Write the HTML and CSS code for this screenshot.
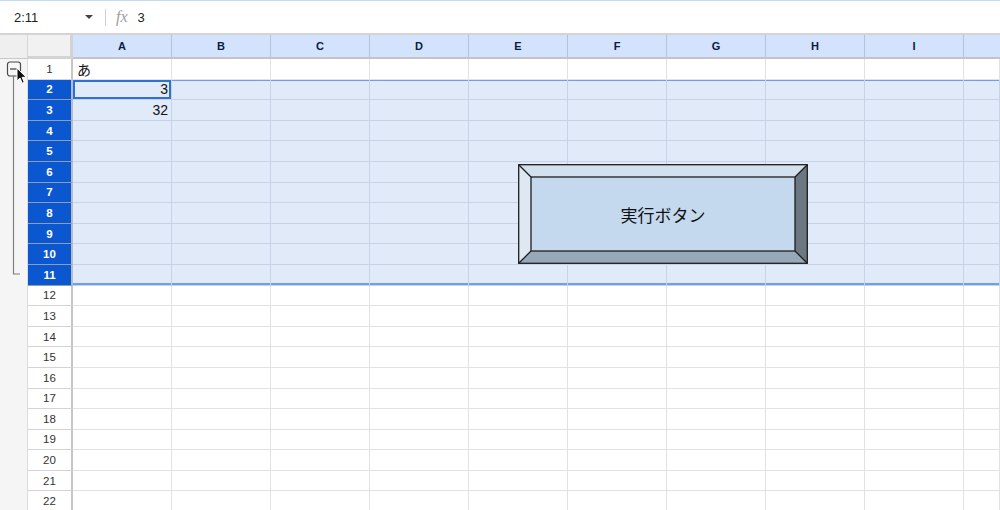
FILE: index.html
```html
<!DOCTYPE html>
<html lang="ja">
<head>
<meta charset="utf-8">
<title>Sheet</title>
<link rel="stylesheet" href="styles.css">
</head>
<body>
<div class="app">
  <div class="formula">
    <div class="namebox"><span class="ref">2:11</span><span class="caret"></span></div>
    <div class="sep"></div>
    <span class="fx">fx</span>
    <span class="fval">3</span>
  </div>
  <div class="sheet">
    <div class="grid">
      <div class="ghead"></div>
      <div class="corner"></div>
      <div class="ch">A</div><div class="ch">B</div><div class="ch">C</div><div class="ch">D</div><div class="ch">E</div><div class="ch">F</div><div class="ch">G</div><div class="ch">H</div><div class="ch">I</div><div class="ch last"></div>
      <div class="gbody">
        <svg class="bracket" width="28" height="220" viewBox="0 0 28 220">
          <rect x="7.5" y="3" width="13" height="14" rx="2.5" fill="#f7f7f7" stroke="#4a4a4a" stroke-width="1.2"/>
          <line x1="10" y1="10" x2="18" y2="10" stroke="#4a4a4a" stroke-width="1.3"/>
          <polyline points="13.5,17 13.5,215 20,215" fill="none" stroke="#7a7a7a" stroke-width="1.1"/>
        </svg>
      </div>

      <div class="row"><div class="rh">1</div><div class="c t"><span>あ</span></div><div class="c"></div><div class="c"></div><div class="c"></div><div class="c"></div><div class="c"></div><div class="c"></div><div class="c"></div><div class="c"></div><div class="c"></div></div>
      <div class="row sel first"><div class="rh">2</div><div class="c n active">3</div><div class="c"></div><div class="c"></div><div class="c"></div><div class="c"></div><div class="c"></div><div class="c"></div><div class="c"></div><div class="c"></div><div class="c"></div></div>
      <div class="row sel"><div class="rh">3</div><div class="c n">32</div><div class="c"></div><div class="c"></div><div class="c"></div><div class="c"></div><div class="c"></div><div class="c"></div><div class="c"></div><div class="c"></div><div class="c"></div></div>
      <div class="row sel"><div class="rh">4</div><div class="c"></div><div class="c"></div><div class="c"></div><div class="c"></div><div class="c"></div><div class="c"></div><div class="c"></div><div class="c"></div><div class="c"></div><div class="c"></div></div>
      <div class="row sel"><div class="rh">5</div><div class="c"></div><div class="c"></div><div class="c"></div><div class="c"></div><div class="c"></div><div class="c"></div><div class="c"></div><div class="c"></div><div class="c"></div><div class="c"></div></div>
      <div class="row sel"><div class="rh">6</div><div class="c"></div><div class="c"></div><div class="c"></div><div class="c"></div><div class="c"></div><div class="c"></div><div class="c"></div><div class="c"></div><div class="c"></div><div class="c"></div></div>
      <div class="row sel"><div class="rh">7</div><div class="c"></div><div class="c"></div><div class="c"></div><div class="c"></div><div class="c"></div><div class="c"></div><div class="c"></div><div class="c"></div><div class="c"></div><div class="c"></div></div>
      <div class="row sel"><div class="rh">8</div><div class="c"></div><div class="c"></div><div class="c"></div><div class="c"></div><div class="c"></div><div class="c"></div><div class="c"></div><div class="c"></div><div class="c"></div><div class="c"></div></div>
      <div class="row sel"><div class="rh">9</div><div class="c"></div><div class="c"></div><div class="c"></div><div class="c"></div><div class="c"></div><div class="c"></div><div class="c"></div><div class="c"></div><div class="c"></div><div class="c"></div></div>
      <div class="row sel"><div class="rh">10</div><div class="c"></div><div class="c"></div><div class="c"></div><div class="c"></div><div class="c"></div><div class="c"></div><div class="c"></div><div class="c"></div><div class="c"></div><div class="c"></div></div>
      <div class="row sel last"><div class="rh">11</div><div class="c"></div><div class="c"></div><div class="c"></div><div class="c"></div><div class="c"></div><div class="c"></div><div class="c"></div><div class="c"></div><div class="c"></div><div class="c"></div></div>
      <div class="row"><div class="rh">12</div><div class="c"></div><div class="c"></div><div class="c"></div><div class="c"></div><div class="c"></div><div class="c"></div><div class="c"></div><div class="c"></div><div class="c"></div><div class="c"></div></div>
      <div class="row"><div class="rh">13</div><div class="c"></div><div class="c"></div><div class="c"></div><div class="c"></div><div class="c"></div><div class="c"></div><div class="c"></div><div class="c"></div><div class="c"></div><div class="c"></div></div>
      <div class="row"><div class="rh">14</div><div class="c"></div><div class="c"></div><div class="c"></div><div class="c"></div><div class="c"></div><div class="c"></div><div class="c"></div><div class="c"></div><div class="c"></div><div class="c"></div></div>
      <div class="row"><div class="rh">15</div><div class="c"></div><div class="c"></div><div class="c"></div><div class="c"></div><div class="c"></div><div class="c"></div><div class="c"></div><div class="c"></div><div class="c"></div><div class="c"></div></div>
      <div class="row"><div class="rh">16</div><div class="c"></div><div class="c"></div><div class="c"></div><div class="c"></div><div class="c"></div><div class="c"></div><div class="c"></div><div class="c"></div><div class="c"></div><div class="c"></div></div>
      <div class="row"><div class="rh">17</div><div class="c"></div><div class="c"></div><div class="c"></div><div class="c"></div><div class="c"></div><div class="c"></div><div class="c"></div><div class="c"></div><div class="c"></div><div class="c"></div></div>
      <div class="row"><div class="rh">18</div><div class="c"></div><div class="c"></div><div class="c"></div><div class="c"></div><div class="c"></div><div class="c"></div><div class="c"></div><div class="c"></div><div class="c"></div><div class="c"></div></div>
      <div class="row"><div class="rh">19</div><div class="c"></div><div class="c"></div><div class="c"></div><div class="c"></div><div class="c"></div><div class="c"></div><div class="c"></div><div class="c"></div><div class="c"></div><div class="c"></div></div>
      <div class="row"><div class="rh">20</div><div class="c"></div><div class="c"></div><div class="c"></div><div class="c"></div><div class="c"></div><div class="c"></div><div class="c"></div><div class="c"></div><div class="c"></div><div class="c"></div></div>
      <div class="row"><div class="rh">21</div><div class="c"></div><div class="c"></div><div class="c"></div><div class="c"></div><div class="c"></div><div class="c"></div><div class="c"></div><div class="c"></div><div class="c"></div><div class="c"></div></div>
      <div class="row"><div class="rh">22</div><div class="c"></div><div class="c"></div><div class="c"></div><div class="c"></div><div class="c"></div><div class="c"></div><div class="c"></div><div class="c"></div><div class="c"></div><div class="c"></div></div>
    </div>

    <div class="drawbtn">
      <svg class="bevel" width="290" height="100" viewBox="0 0 290 100">
        <polygon points="0.5,0.5 289.5,0.5 277,13 13,13" fill="#d3e1ef"/>
        <polygon points="0.5,0.5 13,13 13,87 0.5,99.5" fill="#dee8f2"/>
        <polygon points="289.5,0.5 289.5,99.5 277,87 277,13" fill="#6b7781"/>
        <polygon points="0.5,99.5 13,87 277,87 289.5,99.5" fill="#97a8b8"/>
        <rect x="13" y="13" width="264" height="74" fill="#c5d9ee"/>
        <g fill="none" stroke="#1e1e1e" stroke-width="1.3">
          <rect x="0.7" y="0.7" width="288.6" height="98.6"/>
          <rect x="13" y="13" width="264" height="74"/>
          <line x1="0.7" y1="0.7" x2="13" y2="13"/>
          <line x1="289.3" y1="0.7" x2="277" y2="13"/>
          <line x1="0.7" y1="99.3" x2="13" y2="87"/>
          <line x1="289.3" y1="99.3" x2="277" y2="87"/>
        </g>
      </svg>
      <span class="label">実行ボタン</span>
    </div>

    <svg class="cursor" width="12" height="18" viewBox="0 0 12 18">
      <path d="M1 1 L1 14 L4 11 L6.3 16.2 L8.3 15.3 L6.1 10.3 L10.2 10.3 Z" fill="#111" stroke="#fff" stroke-width="1" stroke-linejoin="round"/>
    </svg>
  </div>
</div>
</body>
</html>
```

FILE: styles.css
```css
* { box-sizing: border-box; }
html, body { margin: 0; padding: 0; }
body {
  width: 1000px;
  height: 510px;
  overflow: hidden;
  background: #fff;
  font-family: "Liberation Sans", Arial, "Noto Sans CJK JP", sans-serif;
  color: #1f1f1f;
}
.app { display: flex; flex-direction: column; }

.formula {
  height: 35px;
  border-top: 1px solid #c6d9f7;
  border-bottom: 2px solid #d4d4d4;
  display: flex;
  align-items: center;
  background: #fff;
}
.namebox {
  width: 105px;
  display: flex;
  align-items: center;
  justify-content: space-between;
  padding: 0 12px 0 14px;
  font-size: 13px;
}
.caret {
  width: 0; height: 0;
  border-left: 4px solid transparent;
  border-right: 4px solid transparent;
  border-top: 4px solid #444;
}
.sep { width: 1px; height: 17px; background: #d0d0d0; }
.fx {
  margin-left: 10px;
  font-family: "Liberation Serif", serif;
  font-style: italic;
  font-size: 16px;
  color: #9d9d9d;
}
.fval { margin-left: 10px; font-size: 13px; }

.sheet { position: relative; }
.grid {
  display: grid;
  grid-template-columns: 28px 45px repeat(9, 99px) 1fr;
  grid-template-rows: 24px repeat(22, 20.6px);
}
.row { display: contents; }

.ghead {
  background: #efefef;
  border-bottom: 1px solid #c8c8c8;
  border-right: 1px solid #d6d6d6;
}
.corner {
  background: #f1f1f1;
  border-right: 3px solid #d3d3d3;
  border-bottom: 3px solid #d3d3d3;
}
.ch {
  background: #d3e3fd;
  border-right: 1px solid #b4c3da;
  border-bottom: 2px solid #c4c4c4;
  display: flex;
  align-items: center;
  justify-content: center;
  font-size: 11px;
  font-weight: bold;
  color: #0b1d3d;
}
.ch.last { border-right: none; }

.gbody {
  grid-column: 1;
  grid-row: 2 / -1;
  background: #f5f5f5;
  border-right: 1px solid #dcdcdc;
}
.bracket { display: block; }

.rh {
  grid-column: 2;
  background: #fff;
  border-right: 2px solid #c6c6c6;
  border-bottom: 1px solid #d3d3d3;
  display: flex;
  align-items: center;
  justify-content: center;
  font-size: 11.5px;
  color: #333;
}
.c {
  background: #fff;
  border-right: 1px solid #e2e2e2;
  border-bottom: 1px solid #e2e2e2;
  display: flex;
  align-items: center;
  font-size: 14px;
  color: #111;
  padding: 0 4px;
}
.c.n { justify-content: flex-end; padding-right: 3px; }
.c.t { font-family: "Liberation Sans", "Noto Sans CJK JP", sans-serif; }

.sel .rh {
  background: #0b57d0;
  color: #fff;
  font-weight: bold;
  border-bottom-color: #8d9cb8;
  border-right-color: #b5bcc8;
}
.sel .c {
  background: #e1eaf8;
  border-right-color: #c6d2e5;
  border-bottom-color: #c6d2e5;
}
.first .c { box-shadow: inset 0 1px 0 #6d9ef0; }
.last .c { box-shadow: inset 0 -2px 0 #6d9ef0; }
.first .c.active { box-shadow: inset 0 0 0 2px #2f6fd8; }

.drawbtn {
  position: absolute;
  left: 518px;
  top: 129px;
  width: 290px;
  height: 100px;
  display: flex;
  align-items: center;
  justify-content: center;
  padding: 13px;
}
.bevel { position: absolute; left: 0; top: 0; }
.label {
  position: relative;
  font-family: "Noto Sans CJK JP", sans-serif;
  font-size: 17px;
  color: #111;
}
.cursor {
  position: absolute;
  left: 16px;
  top: 32px;
}
```
